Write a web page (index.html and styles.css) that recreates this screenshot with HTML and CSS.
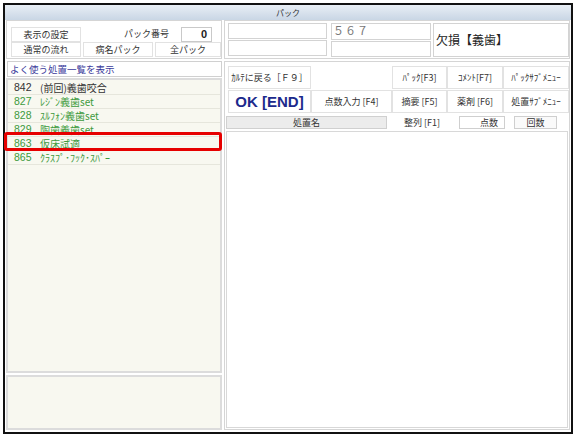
FILE: index.html
```html
<!DOCTYPE html>
<html lang="ja">
<head>
<meta charset="utf-8">
<title>パック</title>
<link rel="stylesheet" href="styles.css">
</head>
<body>
<div class="frame">
  <div class="titlebar">パック</div>
  <div class="main">
    <div class="leftcol">
      <div class="lt-panel">
        <div class="lt-row1">
          <div class="cell w70">表示の設定</div>
          <div class="pack-label">パック番号</div>
          <div class="pack-no">0</div>
        </div>
        <div class="lt-row2">
          <div class="cell">通常の流れ</div>
          <div class="cell">病名パック</div>
          <div class="cell">全パック</div>
        </div>
      </div>
      <div class="fav-head">よく使う処置一覧を表示</div>
      <div class="fav-list">
        <div class="fav-row dark"><span class="num">842</span><span>(前回)義歯咬合</span></div>
        <div class="fav-row"><span class="num">827</span><span>ﾚｼﾞﾝ義歯set</span></div>
        <div class="fav-row"><span class="num">828</span><span>ｽﾙﾌｫﾝ義歯set</span></div>
        <div class="fav-row"><span class="num">829</span><span>陶歯義歯set</span></div>
        <div class="fav-row"><span class="num">863</span><span>仮床試適</span></div>
        <div class="fav-row"><span class="num">865</span><span>ｸﾗｽﾌﾟ･ﾌｯｸ･ｽﾊﾟｰ</span></div>
        <div class="highlight"></div>
      </div>
      <div class="lower-panel"></div>
    </div>
    <div class="rightcol">
      <div class="rt-panel">
        <div class="rt-col colA">
          <div class="box"></div>
          <div class="box"></div>
        </div>
        <div class="rt-col colB">
          <div class="box teeth">５６７</div>
          <div class="box"></div>
        </div>
        <div class="box colC">欠損【義歯】</div>
      </div>
      <div class="rt-main">
        <div class="btn-grid">
          <div class="btn">ｶﾙﾃに戻る［Ｆ９］</div>
          <div class="btn-empty"></div>
          <div class="btn">ﾊﾟｯｸ[F3]</div>
          <div class="btn">ｺﾒﾝﾄ[F7]</div>
          <div class="btn">ﾊﾟｯｸｻﾌﾞﾒﾆｭｰ</div>
          <div class="btn ok">OK [END]</div>
          <div class="btn">点数入力 [F4]</div>
          <div class="btn">摘要 [F5]</div>
          <div class="btn">薬剤 [F6]</div>
          <div class="btn">処置ｻﾌﾞﾒﾆｭｰ</div>
        </div>
        <div class="head-row">
          <div class="h-name">処置名</div>
          <div class="h-sort">整列 [F1]</div>
          <div class="h-points">点数</div>
          <div class="h-count">回数</div>
        </div>
        <div class="rt-list"></div>
      </div>
    </div>
  </div>
</div>
</body>
</html>
```
FILE: styles.css
```css
* { box-sizing: border-box; }
body {
  margin: 0;
  background: #fff;
  font-family: "Noto Sans CJK JP", "Noto Sans", sans-serif;
  font-size: 9px;
  color: #333;
}
.frame {
  margin: 3px 0 0 3px;
  width: 570px;
  height: 431px;
  border: 2px solid #111;
  display: flex;
  flex-direction: column;
}
.titlebar {
  height: 15px;
  flex: none;
  background: linear-gradient(#e8eef5, #c9d6e5);
  text-align: center;
  font-size: 8px;
  line-height: 15px;
  color: #333;
}
.main {
  flex: 1;
  display: grid;
  grid-template-columns: 216px 346px;
  column-gap: 2px;
  padding: 0 0 2px 1px;
  min-height: 0;
}
.leftcol {
  display: flex;
  flex-direction: column;
  min-height: 0;
}
.lt-panel {
  height: 39px;
  flex: none;
  border: 1px solid #d5d5d5;
  padding: 6px 0 0 4px;
  margin-bottom: 2px;
}
.cell {
  height: 15px;
  border: 1px solid #e2e2e2;
  background: #fff;
  text-align: center;
  line-height: 13px;
  white-space: nowrap;
}
.w70 { width: 70px; flex: none; }
.lt-row1 {
  display: flex;
  height: 15px;
}
.pack-label {
  flex: 1;
  text-align: right;
  padding-right: 12px;
  line-height: 14px;
}
.pack-no {
  width: 31px;
  height: 15px;
  margin-right: 9px;
  border: 1px solid #c9c9c9;
  background: #fff;
  text-align: right;
  padding-right: 4px;
  font-family: "Liberation Sans", sans-serif;
  font-weight: bold;
  font-size: 11px;
  line-height: 13px;
  color: #222;
}
.lt-row2 {
  display: grid;
  grid-template-columns: 70px 70px 66px;
  column-gap: 2px;
}
.fav-head {
  height: 16px;
  flex: none;
  margin: 0 0 1px 1px;
  border: 1px solid #d0d0d0;
  background: #fff;
  color: #3b3b9b;
  font-size: 9.5px;
  line-height: 14px;
  padding-left: 2px;
}
.fav-list {
  position: relative;
  flex: 1;
  min-height: 0;
  background: #f8f8f0;
  border: 2px solid #dcdcdc;
  padding-top: 1px;
}
.fav-row {
  height: 14px;
  display: flex;
  border-bottom: 1px solid #e6e6dc;
  color: #3d9a3d;
  font-size: 10px;
  line-height: 13px;
  padding-left: 6px;
  white-space: nowrap;
}
.fav-row.dark { color: #333; }
.fav-row .num {
  width: 26px;
  flex: none;
  font-family: "Liberation Sans", sans-serif;
  font-size: 10.5px;
}
.highlight {
  position: absolute;
  left: -4px;
  top: 52px;
  width: 218px;
  height: 19px;
  border: 3px solid #e60000;
  border-radius: 3px;
}
.lower-panel {
  height: 55px;
  flex: none;
  margin-top: 2px;
  background: #f8f8f0;
  border: 2px solid #dcdcdc;
}
.rightcol {
  display: flex;
  flex-direction: column;
  min-height: 0;
}
.rt-panel {
  height: 39px;
  flex: none;
  margin-bottom: 2px;
  border: 1px solid #d5d5d5;
  padding: 2px 0 0 3px;
  display: flex;
}
.rt-col {
  display: flex;
  flex-direction: column;
  gap: 1px;
}
.colA { width: 99px; margin-right: 4px; }
.colB { width: 100px; margin-right: 2px; }
.box {
  height: 16px;
  border: 1px solid #d3d3d3;
  background: #fff;
}
.teeth {
  height: 17px;
  color: #777;
  font-size: 11px;
  letter-spacing: 1px;
  line-height: 13px;
  padding-left: 1px;
}
.colC {
  width: 136px;
  height: 34px;
  font-size: 12px;
  color: #222;
  line-height: 32px;
  padding-left: 2px;
}
.rt-main {
  flex: 1;
  min-height: 0;
  border: 1px solid #d5d5d5;
  padding: 4px 1px 1px 1px;
  display: flex;
  flex-direction: column;
}
.btn-grid {
  display: grid;
  grid-template-columns: 83px 81px 55px 56px 66px;
  grid-template-rows: 23px 23px;
  row-gap: 1px;
  margin-left: 2px;
  flex: none;
}
.btn {
  border: 1px solid #e2e2e2;
  background: #fff;
  display: flex;
  align-items: center;
  justify-content: center;
  white-space: nowrap;
  font-size: 9px;
}
.btn.ok {
  font-family: "Liberation Sans", sans-serif;
  font-weight: bold;
  font-size: 15px;
  color: #1c2a8c;
}
.head-row {
  display: flex;
  height: 13px;
  margin-top: 3px;
  flex: none;
  line-height: 11px;
}
.h-name {
  width: 161px;
  background: #ececec;
  border: 1px solid #d0d0d0;
  text-align: center;
}
.h-sort {
  width: 70px;
  text-align: center;
  line-height: 13px;
}
.h-points {
  width: 46px;
  margin-left: 2px;
  border: 1px solid #cfcfcf;
  background: #fff;
  text-align: right;
  padding-right: 6px;
}
.h-count {
  width: 43px;
  margin-left: 9px;
  border: 1px solid #cfcfcf;
  background: #fafafa;
  text-align: center;
}
.rt-list {
  flex: 1;
  margin-top: 2px;
  border: 1px solid #d8d8d8;
  background: #fff;
}
```
